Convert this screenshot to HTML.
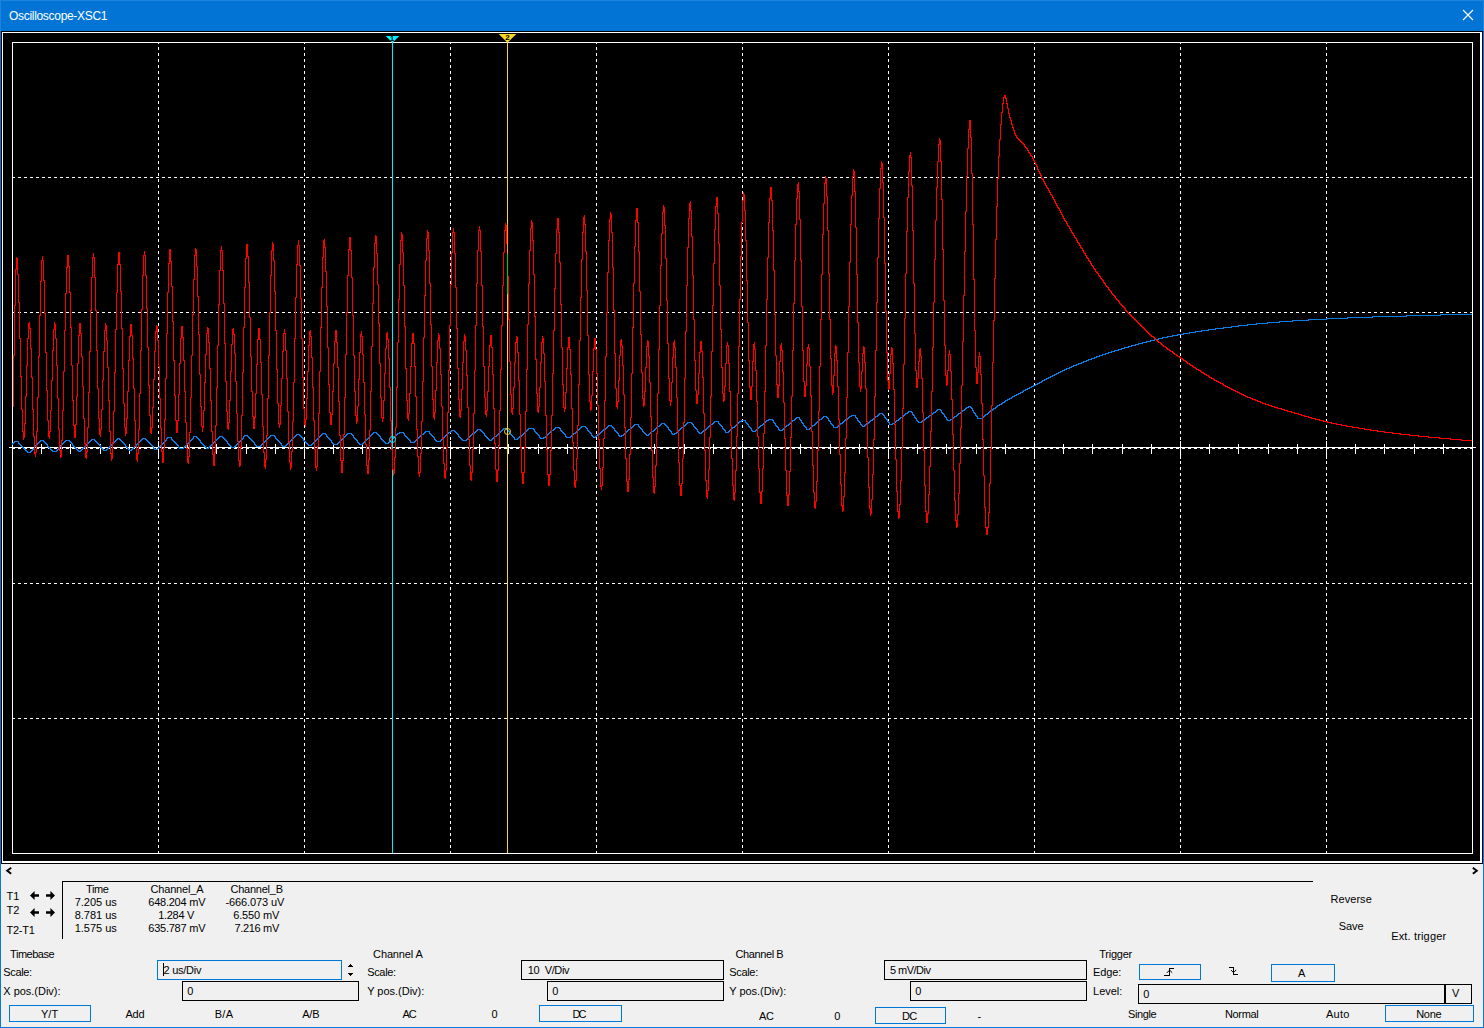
<!DOCTYPE html>
<html lang="en">
<head>
<meta charset="utf-8">
<title>Oscilloscope-XSC1</title>
<style>
html,body{margin:0;padding:0;background:#f0f0f0;}
body{width:1484px;height:1028px;position:relative;overflow:hidden;font-family:"Liberation Sans",sans-serif;font-size:11px;color:#000;}
.win{position:absolute;left:0;top:0;width:1482px;height:1026px;border:1px solid #0a78d7;background:#f0f0f0;}
.title{position:absolute;left:0;top:0;width:1482px;height:30px;background:#0274d6;border:1px solid #1c84dc;border-bottom:0;}
.title .cap{position:absolute;left:8px;top:8px;color:#fff;font-size:12px;line-height:14px;white-space:nowrap;letter-spacing:-0.305px;}
.title svg{position:absolute;left:1461px;top:8px;}
.scope{position:absolute;left:0;top:0;}
.abs{position:absolute;}
.t{position:absolute;white-space:nowrap;line-height:13px;height:13px;}
.t.c{text-align:center;}
.bx{position:absolute;border:1px solid #000;background:transparent;}
.flag{font-family:"Liberation Sans",sans-serif;font-size:7.5px;font-weight:bold;fill:#000;text-anchor:middle;}
</style>
</head>
<body>
<div class="win"></div>
<div class="title"><span class="cap">Oscilloscope-XSC1</span>
<svg width="12" height="12" viewBox="0 0 12 12"><path d="M1 1L11 11M11 1L1 11" stroke="#fff" stroke-width="1.1" fill="none"/></svg>
</div>
<svg class="scope" width="1484" height="864" viewBox="0 0 1484 864" shape-rendering="crispEdges">
<rect x="1" y="31" width="1482" height="833" fill="#000"/>
<rect x="2" y="32" width="1479" height="1" fill="#fff"/>
<rect x="2" y="32" width="1" height="830" fill="#fff"/>
<rect x="1480" y="32" width="2" height="831" fill="#fff"/>
<rect x="2" y="861" width="1480" height="2" fill="#fff"/>
<rect x="12.5" y="42.5" width="1460" height="811" fill="none" stroke="#fff" stroke-width="1"/>
<path d="M158.5 43V853M304.5 43V853M450.5 43V853M596.5 43V853M742.5 43V853M888.5 43V853M1034.5 43V853M1180.5 43V853M1326.5 43V853" stroke="#fff" stroke-width="1" stroke-dasharray="3 3" stroke-dashoffset="2" fill="none"/>
<path d="M12 177.5H1472M12 312.5H1472M12 448.5H1472M12 583.5H1472M12 718.5H1472" stroke="#fff" stroke-width="1" stroke-dasharray="3 3" fill="none"/>
<path d="M9 447.5H1476M12.5 441V459M41.5 444V454M70.5 444V454M100.5 444V454M129.5 444V454M158.5 441V459M187.5 444V454M216.5 444V454M246.5 444V454M275.5 444V454M304.5 441V459M333.5 444V454M362.5 444V454M392.5 444V454M421.5 444V454M450.5 441V459M479.5 444V454M508.5 444V454M538.5 444V454M567.5 444V454M596.5 441V459M625.5 444V454M654.5 444V454M684.5 444V454M713.5 444V454M742.5 441V459M771.5 444V454M800.5 444V454M830.5 444V454M859.5 444V454M888.5 441V459M917.5 444V454M946.5 444V454M976.5 444V454M1005.5 444V454M1034.5 441V459M1063.5 444V454M1092.5 444V454M1122.5 444V454M1151.5 444V454M1180.5 441V459M1209.5 444V454M1238.5 444V454M1268.5 444V454M1297.5 444V454M1326.5 441V459M1355.5 444V454M1384.5 444V454M1414.5 444V454M1443.5 444V454M1472.5 441V459" stroke="#fff" stroke-width="1" fill="none"/>
<path d="M12.5 443V445M13.5 442V444M14.5 441V443M15.5 441V442M16.5 441V442M17.5 441V442M18.5 441V444M19.5 443V445M20.5 444V446M21.5 445V447M22.5 446V448M23.5 447V449M24.5 448V450M25.5 449V451M26.5 450V452M27.5 451V453M28.5 452V453M29.5 452V453M30.5 451V453M31.5 450V452M32.5 449V451M33.5 448V450M34.5 446V449M35.5 445V447M36.5 444V446M37.5 443V445M38.5 442V444M39.5 441V443M40.5 440V442M41.5 440V441M42.5 440V441M43.5 440V442M44.5 441V443M45.5 442V444M46.5 443V445M47.5 444V447M48.5 446V448M49.5 447V449M50.5 448V450M51.5 449V451M52.5 450V452M53.5 451V452M54.5 451V452M55.5 451V452M56.5 450V452M57.5 449V451M58.5 447V450M59.5 446V448M60.5 445V447M61.5 444V446M62.5 443V445M63.5 442V444M64.5 441V443M65.5 440V442M66.5 440V441M67.5 440V441M68.5 440V441M69.5 440V442M70.5 441V443M71.5 442V444M72.5 443V446M73.5 445V447M74.5 446V448M75.5 447V449M76.5 448V450M77.5 449V451M78.5 450V452M79.5 451V452M80.5 450V452M81.5 449V451M82.5 448V450M83.5 447V449M84.5 446V448M85.5 445V447M86.5 444V446M87.5 443V445M88.5 442V444M89.5 441V443M90.5 440V442M91.5 439V441M92.5 439V440M93.5 439V440M94.5 439V441M95.5 440V442M96.5 441V443M97.5 442V444M98.5 443V445M99.5 444V446M100.5 445V448M101.5 447V449M102.5 448V450M103.5 449V451M104.5 450V451M105.5 450V451M106.5 449V451M107.5 448V450M108.5 447V449M109.5 446V448M110.5 445V447M111.5 444V446M112.5 443V445M113.5 442V444M114.5 441V443M115.5 440V442M116.5 439V441M117.5 438V440M118.5 438V439M119.5 438V440M120.5 439V441M121.5 440V442M122.5 441V443M123.5 442V444M124.5 443V445M125.5 444V447M126.5 446V448M127.5 447V449M128.5 448V450M129.5 449V451M130.5 450V451M131.5 449V451M132.5 448V450M133.5 447V449M134.5 446V448M135.5 445V447M136.5 444V446M137.5 443V445M138.5 442V444M139.5 441V443M140.5 440V442M141.5 439V441M142.5 438V440M143.5 438V439M144.5 438V439M145.5 438V440M146.5 439V441M147.5 440V442M148.5 441V443M149.5 442V444M150.5 443V445M151.5 444V446M152.5 445V447M153.5 446V449M154.5 448V450M155.5 449V450M156.5 449V450M157.5 448V450M158.5 447V449M159.5 446V448M160.5 445V447M161.5 444V446M162.5 443V445M163.5 442V444M164.5 441V443M165.5 440V442M166.5 438V441M167.5 437V439M168.5 437V438M169.5 437V438M170.5 437V438M171.5 437V440M172.5 439V441M173.5 440V442M174.5 441V443M175.5 442V444M176.5 443V445M177.5 444V446M178.5 445V448M179.5 447V449M180.5 448V449M181.5 448V449M182.5 448V449M183.5 447V449M184.5 446V448M185.5 445V447M186.5 444V446M187.5 443V445M188.5 442V444M189.5 441V443M190.5 440V442M191.5 439V441M192.5 438V440M193.5 436V439M194.5 436V437M195.5 436V437M196.5 436V438M197.5 437V439M198.5 438V440M199.5 439V441M200.5 440V443M201.5 442V444M202.5 443V445M203.5 444V446M204.5 445V447M205.5 446V448M206.5 447V449M207.5 448V449M208.5 447V449M209.5 446V448M210.5 445V447M211.5 444V446M212.5 443V445M213.5 442V444M214.5 441V443M215.5 440V442M216.5 439V441M217.5 438V440M218.5 437V439M219.5 436V438M220.5 436V437M221.5 436V437M222.5 436V438M223.5 437V439M224.5 438V440M225.5 439V441M226.5 440V442M227.5 441V444M228.5 443V445M229.5 444V446M230.5 445V447M231.5 446V448M232.5 447V448M233.5 447V448M234.5 446V448M235.5 445V447M236.5 444V446M237.5 443V445M238.5 442V444M239.5 441V443M240.5 440V442M241.5 439V441M242.5 438V440M243.5 436V439M244.5 435V437M245.5 435V436M246.5 435V436M247.5 435V437M248.5 436V438M249.5 437V439M250.5 438V440M251.5 439V441M252.5 440V442M253.5 441V443M254.5 442V445M255.5 444V446M256.5 445V447M257.5 446V447M258.5 446V447M259.5 446V447M260.5 445V447M261.5 444V446M262.5 443V445M263.5 442V444M264.5 441V443M265.5 440V442M266.5 439V441M267.5 438V440M268.5 437V439M269.5 436V438M270.5 435V437M271.5 435V436M272.5 435V436M273.5 435V436M274.5 435V437M275.5 436V439M276.5 438V440M277.5 439V441M278.5 440V442M279.5 441V443M280.5 442V444M281.5 443V446M282.5 445V447M283.5 446V447M284.5 446V447M285.5 445V447M286.5 444V446M287.5 443V445M288.5 442V444M289.5 441V443M290.5 440V442M291.5 439V441M292.5 438V440M293.5 437V439M294.5 436V438M295.5 435V437M296.5 434V436M297.5 434V435M298.5 434V435M299.5 434V436M300.5 435V437M301.5 436V438M302.5 437V439M303.5 438V441M304.5 440V442M305.5 441V443M306.5 442V444M307.5 443V445M308.5 444V446M309.5 445V446M310.5 445V446M311.5 444V446M312.5 443V445M313.5 442V444M314.5 441V443M315.5 440V442M316.5 439V441M317.5 438V440M318.5 437V439M319.5 436V438M320.5 435V437M321.5 434V436M322.5 433V435M323.5 433V434M324.5 433V434M325.5 433V435M326.5 434V437M327.5 436V438M328.5 437V439M329.5 438V440M330.5 439V441M331.5 440V443M332.5 442V444M333.5 443V445M334.5 444V445M335.5 444V445M336.5 444V445M337.5 443V445M338.5 442V444M339.5 441V443M340.5 440V442M341.5 439V441M342.5 438V440M343.5 437V439M344.5 436V438M345.5 435V437M346.5 434V436M347.5 433V435M348.5 433V434M349.5 433V434M350.5 433V434M351.5 433V435M352.5 434V436M353.5 435V438M354.5 437V439M355.5 438V440M356.5 439V441M357.5 440V443M358.5 442V444M359.5 443V445M360.5 444V445M361.5 444V445M362.5 443V445M363.5 442V444M364.5 441V443M365.5 440V442M366.5 439V441M367.5 438V440M368.5 437V439M369.5 436V438M370.5 435V437M371.5 434V436M372.5 433V435M373.5 432V434M374.5 432V433M375.5 432V433M376.5 432V434M377.5 433V435M378.5 434V436M379.5 435V437M380.5 436V439M381.5 438V440M382.5 439V441M383.5 440V442M384.5 441V443M385.5 442V444M386.5 443V444M387.5 443V444M388.5 442V444M389.5 441V443M390.5 440V442M391.5 439V441M392.5 438V440M393.5 437V439M394.5 436V438M395.5 435V437M396.5 434V436M397.5 433V435M398.5 433V434M399.5 432V434M400.5 432V433M401.5 432V433M402.5 432V433M403.5 432V434M404.5 433V436M405.5 435V437M406.5 436V438M407.5 437V439M408.5 438V440M409.5 439V441M410.5 440V443M411.5 442V443M412.5 442V443M413.5 442V443M414.5 441V443M415.5 440V442M416.5 439V441M417.5 438V440M418.5 437V439M419.5 436V438M420.5 435V437M421.5 434V436M422.5 434V435M423.5 433V435M424.5 432V434M425.5 431V433M426.5 431V432M427.5 431V432M428.5 431V432M429.5 431V434M430.5 433V435M431.5 434V436M432.5 435V437M433.5 436V438M434.5 437V440M435.5 439V441M436.5 440V442M437.5 441V442M438.5 441V442M439.5 441V442M440.5 440V442M441.5 439V441M442.5 438V440M443.5 437V439M444.5 436V438M445.5 435V437M446.5 434V436M447.5 433V435M448.5 432V434M449.5 432V433M450.5 431V433M451.5 430V432M452.5 430V431M453.5 430V431M454.5 430V432M455.5 431V433M456.5 432V434M457.5 433V435M458.5 434V437M459.5 436V438M460.5 437V439M461.5 438V440M462.5 439V441M463.5 440V441M464.5 440V441M465.5 440V441M466.5 439V441M467.5 438V440M468.5 437V439M469.5 436V438M470.5 435V437M471.5 434V436M472.5 433V435M473.5 433V434M474.5 432V434M475.5 431V433M476.5 430V432M477.5 429V431M478.5 429V430M479.5 429V430M480.5 429V431M481.5 430V432M482.5 431V433M483.5 432V434M484.5 433V436M485.5 435V437M486.5 436V438M487.5 437V439M488.5 438V440M489.5 439V441M490.5 440V441M491.5 439V441M492.5 438V440M493.5 437V439M494.5 436V438M495.5 436V437M496.5 435V437M497.5 434V436M498.5 433V435M499.5 432V434M500.5 431V433M501.5 430V432M502.5 429V431M503.5 428V430M504.5 428V429M505.5 428V429M506.5 428V430M507.5 429V431M508.5 430V432M509.5 431V434M510.5 433V435M511.5 434V436M512.5 435V437M513.5 436V438M514.5 437V440M515.5 439V440M516.5 439V440M517.5 438V440M518.5 437V439M519.5 436V438M520.5 436V437M521.5 435V437M522.5 434V436M523.5 433V435M524.5 432V434M525.5 431V433M526.5 430V432M527.5 429V431M528.5 428V430M529.5 428V429M530.5 428V429M531.5 428V429M532.5 428V429M533.5 428V430M534.5 429V432M535.5 431V433M536.5 432V434M537.5 433V435M538.5 434V436M539.5 435V438M540.5 437V439M541.5 438V439M542.5 438V439M543.5 437V439M544.5 437V438M545.5 436V438M546.5 435V437M547.5 434V436M548.5 433V435M549.5 432V434M550.5 431V433M551.5 430V432M552.5 430V431M553.5 429V431M554.5 428V430M555.5 427V429M556.5 427V428M557.5 427V428M558.5 427V428M559.5 427V429M560.5 428V431M561.5 430V432M562.5 431V433M563.5 432V434M564.5 433V435M565.5 434V437M566.5 436V438M567.5 437V438M568.5 437V438M569.5 437V438M570.5 436V438M571.5 435V437M572.5 434V436M573.5 433V435M574.5 433V434M575.5 432V434M576.5 431V433M577.5 430V432M578.5 429V431M579.5 428V430M580.5 427V429M581.5 426V428M582.5 426V427M583.5 426V427M584.5 426V427M585.5 426V428M586.5 427V429M587.5 428V431M588.5 430V432M589.5 431V433M590.5 432V434M591.5 433V436M592.5 435V437M593.5 436V438M594.5 437V438M595.5 436V438M596.5 435V437M597.5 434V436M598.5 434V435M599.5 433V435M600.5 432V434M601.5 431V433M602.5 430V432M603.5 429V431M604.5 429V430M605.5 428V430M606.5 427V429M607.5 426V428M608.5 425V427M609.5 425V426M610.5 425V426M611.5 425V427M612.5 426V428M613.5 427V429M614.5 428V431M615.5 430V432M616.5 431V433M617.5 432V434M618.5 433V436M619.5 435V437M620.5 436V437M621.5 435V437M622.5 435V436M623.5 434V436M624.5 433V435M625.5 432V434M626.5 431V433M627.5 430V432M628.5 429V431M629.5 429V430M630.5 428V430M631.5 427V429M632.5 426V428M633.5 425V427M634.5 424V426M635.5 424V425M636.5 424V425M637.5 424V425M638.5 424V427M639.5 426V428M640.5 427V429M641.5 428V430M642.5 429V432M643.5 431V433M644.5 432V434M645.5 433V435M646.5 434V436M647.5 435V436M648.5 434V436M649.5 433V435M650.5 432V434M651.5 431V433M652.5 431V432M653.5 430V432M654.5 429V431M655.5 428V430M656.5 427V429M657.5 426V428M658.5 426V427M659.5 425V427M660.5 424V426M661.5 423V425M662.5 423V424M663.5 423V424M664.5 423V425M665.5 424V426M666.5 425V427M667.5 426V428M668.5 427V430M669.5 429V431M670.5 430V432M671.5 431V434M672.5 433V435M673.5 434V435M674.5 433V435M675.5 433V434M676.5 432V434M677.5 431V433M678.5 430V432M679.5 429V431M680.5 428V430M681.5 427V429M682.5 427V428M683.5 426V428M684.5 425V427M685.5 424V426M686.5 423V425M687.5 422V424M688.5 422V423M689.5 422V423M690.5 422V423M691.5 422V424M692.5 423V425M693.5 424V427M694.5 426V428M695.5 427V429M696.5 428V430M697.5 429V432M698.5 431V433M699.5 432V434M700.5 433V434M701.5 432V434M702.5 431V433M703.5 430V432M704.5 430V431M705.5 429V431M706.5 428V430M707.5 427V429M708.5 426V428M709.5 425V427M710.5 424V426M711.5 424V425M712.5 423V425M713.5 422V424M714.5 421V423M715.5 421V422M716.5 421V422M717.5 421V422M718.5 421V424M719.5 423V425M720.5 424V426M721.5 425V427M722.5 426V429M723.5 428V430M724.5 429V431M725.5 430V433M726.5 432V433M727.5 432V433M728.5 431V433M729.5 430V432M730.5 429V431M731.5 428V430M732.5 427V429M733.5 427V428M734.5 426V428M735.5 425V427M736.5 424V426M737.5 423V425M738.5 422V424M739.5 421V423M740.5 421V422M741.5 420V422M742.5 420V421M743.5 420V421M744.5 420V421M745.5 420V423M746.5 422V424M747.5 423V425M748.5 424V427M749.5 426V428M750.5 427V429M751.5 428V431M752.5 430V432M753.5 431V432M754.5 431V432M755.5 430V432M756.5 429V431M757.5 428V430M758.5 427V429M759.5 426V428M760.5 425V427M761.5 425V426M762.5 424V426M763.5 423V425M764.5 422V424M765.5 421V423M766.5 420V422M767.5 420V421M768.5 419V421M769.5 419V420M770.5 419V420M771.5 419V420M772.5 419V421M773.5 420V423M774.5 422V424M775.5 423V426M776.5 425V427M777.5 426V428M778.5 427V430M779.5 429V431M780.5 430V431M781.5 430V431M782.5 429V431M783.5 428V430M784.5 427V429M785.5 426V428M786.5 425V427M787.5 425V426M788.5 424V426M789.5 423V425M790.5 422V424M791.5 421V423M792.5 420V422M793.5 420V421M794.5 419V421M795.5 418V420M796.5 417V419M797.5 417V418M798.5 417V418M799.5 417V420M800.5 419V421M801.5 420V423M802.5 422V424M803.5 423V426M804.5 425V427M805.5 426V428M806.5 427V430M807.5 429V430M808.5 429V430M809.5 428V430M810.5 427V429M811.5 426V428M812.5 425V427M813.5 425V426M814.5 424V426M815.5 423V425M816.5 422V424M817.5 421V423M818.5 420V422M819.5 419V421M820.5 419V420M821.5 418V420M822.5 417V419M823.5 416V418M824.5 416V417M825.5 416V417M826.5 416V418M827.5 417V419M828.5 418V421M829.5 420V422M830.5 421V424M831.5 423V425M832.5 424V426M833.5 425V428M834.5 427V428M835.5 427V428M836.5 427V428M837.5 426V428M838.5 425V427M839.5 424V426M840.5 423V425M841.5 423V424M842.5 422V424M843.5 421V423M844.5 420V422M845.5 419V421M846.5 419V420M847.5 418V420M848.5 417V419M849.5 416V418M850.5 416V417M851.5 415V417M852.5 415V416M853.5 415V416M854.5 415V416M855.5 415V418M856.5 417V419M857.5 418V421M858.5 420V422M859.5 421V423M860.5 422V425M861.5 424V426M862.5 425V427M863.5 426V427M864.5 425V427M865.5 424V426M866.5 423V425M867.5 423V424M868.5 422V424M869.5 421V423M870.5 420V422M871.5 420V421M872.5 419V421M873.5 418V420M874.5 417V419M875.5 416V418M876.5 416V417M877.5 415V417M878.5 414V416M879.5 413V415M880.5 413V414M881.5 413V414M882.5 413V415M883.5 414V416M884.5 415V418M885.5 417V419M886.5 418V420M887.5 419V422M888.5 421V423M889.5 422V425M890.5 424V425M891.5 424V425M892.5 423V425M893.5 423V424M894.5 422V424M895.5 421V423M896.5 420V422M897.5 420V421M898.5 419V421M899.5 418V420M900.5 417V419M901.5 417V418M902.5 416V418M903.5 415V417M904.5 414V416M905.5 413V415M906.5 413V414M907.5 412V414M908.5 411V413M909.5 411V412M910.5 411V412M911.5 411V413M912.5 412V415M913.5 414V416M914.5 415V418M915.5 417V419M916.5 418V421M917.5 420V422M918.5 421V423M919.5 422V423M920.5 422V423M921.5 421V423M922.5 420V422M923.5 420V421M924.5 419V421M925.5 418V420M926.5 417V419M927.5 417V418M928.5 416V418M929.5 415V417M930.5 415V416M931.5 414V416M932.5 413V415M933.5 412V414M934.5 412V413M935.5 411V413M936.5 410V412M937.5 409V411M938.5 409V410M939.5 409V410M940.5 409V411M941.5 410V413M942.5 412V414M943.5 413V415M944.5 414V417M945.5 416V418M946.5 417V420M947.5 419V421M948.5 420V421M949.5 420V421M950.5 419V421M951.5 419V420M952.5 418V420M953.5 417V419M954.5 416V418M955.5 416V417M956.5 415V417M957.5 414V416M958.5 413V415M959.5 413V414M960.5 412V414M961.5 411V413M962.5 410V412M963.5 410V411M964.5 409V411M965.5 408V410M966.5 407V409M967.5 407V408M968.5 406V408M969.5 406V407M970.5 406V408M971.5 407V409M972.5 408V411M973.5 410V413M974.5 412V414M975.5 413V416M976.5 415V417M977.5 416V419M978.5 418V419M979.5 418V419M980.5 418V419M981.5 418V419M982.5 417V419M983.5 416V418M984.5 415V417M985.5 414V416M986.5 414V415M987.5 413V415M988.5 412V414M989.5 411V413M990.5 410V412M991.5 410V411M992.5 409V411M993.5 408V410M994.5 408V409M995.5 407V409M996.5 406V408M997.5 405V407M998.5 405V406M999.5 404V406M1000.5 404V405M1001.5 403V405M1002.5 402V404M1003.5 402V403M1004.5 401V403M1005.5 400V402M1006.5 400V401M1007.5 399V401M1008.5 399V400M1009.5 398V400M1010.5 398V399M1011.5 397V399M1012.5 396V398M1013.5 396V397M1014.5 395V397M1015.5 395V396M1016.5 394V396M1017.5 394V395M1018.5 393V395M1019.5 393V394M1020.5 392V394M1021.5 392V393M1022.5 391V393M1023.5 390V392M1024.5 390V391M1025.5 389V391M1026.5 389V390M1027.5 388V390M1028.5 388V389M1029.5 387V389M1030.5 387V388M1031.5 386V388M1032.5 386V387M1033.5 385V387M1034.5 385V386M1035.5 384V386M1036.5 384V385M1037.5 383V385M1038.5 383V384M1039.5 382V384M1040.5 382V383M1041.5 381V383M1042.5 380V382M1043.5 380V381M1044.5 379V381M1045.5 379V380M1046.5 378V380M1047.5 378V379M1048.5 377V379M1049.5 377V378M1050.5 376V378M1051.5 376V377M1052.5 375V377M1053.5 375V376M1054.5 374V376M1055.5 374V375M1056.5 373V375M1057.5 373V374M1058.5 372V374M1059.5 372V373M1060.5 371V373M1061.5 371V372M1062.5 370V372M1063.5 370V371M1064.5 369V371M1065.5 369V370M1066.5 368V370M1067.5 368V369M1068.5 368V369M1069.5 367V369M1070.5 367V368M1071.5 366V368M1072.5 366V367M1073.5 365V367M1074.5 365V366M1075.5 365V366M1076.5 364V366M1077.5 364V365M1078.5 363V365M1079.5 363V364M1080.5 363V364M1081.5 362V364M1082.5 362V363M1083.5 361V363M1084.5 361V362M1085.5 361V362M1086.5 360V362M1087.5 360V361M1088.5 359V361M1089.5 359V360M1090.5 359V360M1091.5 358V360M1092.5 358V359M1093.5 358V359M1094.5 357V359M1095.5 357V358M1096.5 356V358M1097.5 356V357M1098.5 356V357M1099.5 355V357M1100.5 355V356M1101.5 355V356M1102.5 354V356M1103.5 354V355M1104.5 354V355M1105.5 353V355M1106.5 353V354M1107.5 353V354M1108.5 352V354M1109.5 352V353M1110.5 352V353M1111.5 351V353M1112.5 351V352M1113.5 351V352M1114.5 350V352M1115.5 350V351M1116.5 350V351M1117.5 350V351M1118.5 349V351M1119.5 349V350M1120.5 349V350M1121.5 348V350M1122.5 348V349M1123.5 348V349M1124.5 347V349M1125.5 347V348M1126.5 347V348M1127.5 347V348M1128.5 346V348M1129.5 346V347M1130.5 346V347M1131.5 345V347M1132.5 345V346M1133.5 345V346M1134.5 345V346M1135.5 344V346M1136.5 344V345M1137.5 344V345M1138.5 343V345M1139.5 343V344M1140.5 343V344M1141.5 343V344M1142.5 342V344M1143.5 342V343M1144.5 342V343M1145.5 342V343M1146.5 341V343M1147.5 341V342M1148.5 341V342M1149.5 341V342M1150.5 340V342M1151.5 340V341M1152.5 340V341M1153.5 340V341M1154.5 339V341M1155.5 339V340M1156.5 339V340M1157.5 339V340M1158.5 338V340M1159.5 338V339M1160.5 338V339M1161.5 338V339M1162.5 337V339M1163.5 337V338M1164.5 337V338M1165.5 337V338M1166.5 337V338M1167.5 336V338M1168.5 336V337M1169.5 336V337M1170.5 336V337M1171.5 336V337M1172.5 335V337M1173.5 335V336M1174.5 335V336M1175.5 335V336M1176.5 335V336M1177.5 334V336M1178.5 334V335M1179.5 334V335M1180.5 334V335M1181.5 334V335M1182.5 334V335M1183.5 333V335M1184.5 333V334M1185.5 333V334M1186.5 333V334M1187.5 333V334M1188.5 333V334M1189.5 332V334M1190.5 332V333M1191.5 332V333M1192.5 332V333M1193.5 332V333M1194.5 332V333M1195.5 331V333M1196.5 331V332M1197.5 331V332M1198.5 331V332M1199.5 331V332M1200.5 331V332M1201.5 330V332M1202.5 330V331M1203.5 330V331M1204.5 330V331M1205.5 330V331M1206.5 330V331M1207.5 330V331M1208.5 329V331M1209.5 329V330M1210.5 329V330M1211.5 329V330M1212.5 329V330M1213.5 329V330M1214.5 329V330M1215.5 328V330M1216.5 328V329M1217.5 328V329M1218.5 328V329M1219.5 328V329M1220.5 328V329M1221.5 328V329M1222.5 328V329M1223.5 327V329M1224.5 327V328M1225.5 327V328M1226.5 327V328M1227.5 327V328M1228.5 327V328M1229.5 327V328M1230.5 327V328M1231.5 326V328M1232.5 326V327M1233.5 326V327M1234.5 326V327M1235.5 326V327M1236.5 326V327M1237.5 326V327M1238.5 325V327M1239.5 325V326M1240.5 325V326M1241.5 325V326M1242.5 325V326M1243.5 325V326M1244.5 325V326M1245.5 325V326M1246.5 325V326M1247.5 324V326M1248.5 324V325M1249.5 324V325M1250.5 324V325M1251.5 324V325M1252.5 324V325M1253.5 324V325M1254.5 324V325M1255.5 324V325M1256.5 323V325M1257.5 323V324M1258.5 323V324M1259.5 323V324M1260.5 323V324M1261.5 323V324M1262.5 323V324M1263.5 323V324M1264.5 323V324M1265.5 323V324M1266.5 323V324M1267.5 322V324M1268.5 322V323M1269.5 322V323M1270.5 322V323M1271.5 322V323M1272.5 322V323M1273.5 322V323M1274.5 322V323M1275.5 322V323M1276.5 322V323M1277.5 322V323M1278.5 322V323M1279.5 321V323M1280.5 321V322M1281.5 321V322M1282.5 321V322M1283.5 321V322M1284.5 321V322M1285.5 321V322M1286.5 321V322M1287.5 321V322M1288.5 321V322M1289.5 321V322M1290.5 321V322M1291.5 321V322M1292.5 320V322M1293.5 320V321M1294.5 320V321M1295.5 320V321M1296.5 320V321M1297.5 320V321M1298.5 320V321M1299.5 320V321M1300.5 320V321M1301.5 320V321M1302.5 320V321M1303.5 320V321M1304.5 320V321M1305.5 320V321M1306.5 320V321M1307.5 320V321M1308.5 319V321M1309.5 319V320M1310.5 319V320M1311.5 319V320M1312.5 319V320M1313.5 319V320M1314.5 319V320M1315.5 319V320M1316.5 319V320M1317.5 319V320M1318.5 319V320M1319.5 319V320M1320.5 319V320M1321.5 319V320M1322.5 319V320M1323.5 319V320M1324.5 319V320M1325.5 319V320M1326.5 318V320M1327.5 318V319M1328.5 318V319M1329.5 318V319M1330.5 318V319M1331.5 318V319M1332.5 318V319M1333.5 318V319M1334.5 318V319M1335.5 318V319M1336.5 318V319M1337.5 318V319M1338.5 318V319M1339.5 318V319M1340.5 318V319M1341.5 318V319M1342.5 318V319M1343.5 318V319M1344.5 318V319M1345.5 318V319M1346.5 318V319M1347.5 317V319M1348.5 317V318M1349.5 317V318M1350.5 317V318M1351.5 317V318M1352.5 317V318M1353.5 317V318M1354.5 317V318M1355.5 317V318M1356.5 317V318M1357.5 317V318M1358.5 317V318M1359.5 317V318M1360.5 317V318M1361.5 317V318M1362.5 317V318M1363.5 317V318M1364.5 317V318M1365.5 317V318M1366.5 317V318M1367.5 317V318M1368.5 317V318M1369.5 317V318M1370.5 317V318M1371.5 317V318M1372.5 316V318M1373.5 316V317M1374.5 316V317M1375.5 316V317M1376.5 316V317M1377.5 316V317M1378.5 316V317M1379.5 316V317M1380.5 316V317M1381.5 316V317M1382.5 316V317M1383.5 316V317M1384.5 316V317M1385.5 316V317M1386.5 316V317M1387.5 316V317M1388.5 316V317M1389.5 316V317M1390.5 316V317M1391.5 316V317M1392.5 316V317M1393.5 316V317M1394.5 316V317M1395.5 316V317M1396.5 316V317M1397.5 316V317M1398.5 316V317M1399.5 316V317M1400.5 316V317M1401.5 316V317M1402.5 316V317M1403.5 316V317M1404.5 316V317M1405.5 316V317M1406.5 315V317M1407.5 315V316M1408.5 315V316M1409.5 315V316M1410.5 315V316M1411.5 315V316M1412.5 315V316M1413.5 315V316M1414.5 315V316M1415.5 315V316M1416.5 315V316M1417.5 315V316M1418.5 315V316M1419.5 315V316M1420.5 315V316M1421.5 315V316M1422.5 315V316M1423.5 315V316M1424.5 315V316M1425.5 315V316M1426.5 315V316M1427.5 315V316M1428.5 315V316M1429.5 315V316M1430.5 315V316M1431.5 315V316M1432.5 315V316M1433.5 315V316M1434.5 315V316M1435.5 315V316M1436.5 315V316M1437.5 315V316M1438.5 315V316M1439.5 315V316M1440.5 314V316M1441.5 314V315M1442.5 314V315M1443.5 314V315M1444.5 314V315M1445.5 314V315M1446.5 314V315M1447.5 314V315M1448.5 314V315M1449.5 314V315M1450.5 314V315M1451.5 314V315M1452.5 314V315M1453.5 314V315M1454.5 314V315M1455.5 314V315M1456.5 314V315M1457.5 314V315M1458.5 314V315M1459.5 314V315M1460.5 314V315M1461.5 314V315M1462.5 314V315M1463.5 314V315M1464.5 314V315M1465.5 314V315M1466.5 314V315M1467.5 314V315M1468.5 314V315M1469.5 314V315M1470.5 314V315M1471.5 314V315" stroke="#0a7ee6" stroke-width="1" fill="none"/>
<path d="M392.5 42V853" stroke="#00f0ff" stroke-width="1"/>
<path d="M507.5 42V853" stroke="#f8d820" stroke-width="1"/>
<path d="M13.5 355V407M14.5 305V356M15.5 269V306M16.5 257V270M17.5 258V275M18.5 274V303M19.5 302V339M20.5 338V377M21.5 376V410M22.5 409V432M23.5 431V440M24.5 423V438M25.5 396V424M26.5 365V397M27.5 338V366M28.5 323V339M29.5 322V329M30.5 328V349M31.5 348V378M32.5 377V410M33.5 409V437M34.5 436V454M35.5 452V457M36.5 431V453M37.5 397V432M38.5 356V398M39.5 315V357M40.5 281V316M41.5 260V282M42.5 256V261M43.5 260V281M44.5 280V314M45.5 313V353M46.5 352V391M47.5 390V421M48.5 420V437M49.5 431V439M50.5 410V432M51.5 380V411M52.5 350V381M53.5 329V351M54.5 322V330M55.5 324V339M56.5 338V366M57.5 365V399M58.5 398V430M59.5 429V451M60.5 450V458M61.5 440V457M62.5 410V441M63.5 371V411M64.5 330V372M65.5 293V331M66.5 267V294M67.5 255V268M68.5 255V267M69.5 266V293M70.5 292V328M71.5 327V366M72.5 365V401M73.5 400V426M74.5 425V438M75.5 424V438M76.5 396V425M77.5 363V397M78.5 335V364M79.5 323V336M80.5 323V334M81.5 333V357M82.5 356V387M83.5 386V419M84.5 418V444M85.5 443V458M86.5 451V459M87.5 427V452M88.5 392V428M89.5 351V393M90.5 310V352M91.5 277V311M92.5 257V278M93.5 253V258M94.5 257V278M95.5 277V311M96.5 310V351M97.5 350V389M98.5 388V419M99.5 418V435M100.5 429V437M101.5 409V430M102.5 380V410M103.5 351V381M104.5 330V352M105.5 323V331M106.5 325V341M107.5 340V368M108.5 367V401M109.5 400V432M110.5 431V454M111.5 453V461M112.5 442V459M113.5 411V443M114.5 372V412M115.5 329V373M116.5 292V330M117.5 264V293M118.5 252V265M119.5 252V265M120.5 264V292M121.5 291V329M122.5 328V369M123.5 368V404M124.5 403V428M125.5 427V436M126.5 418V434M127.5 391V419M128.5 360V392M129.5 336V361M130.5 324V337M131.5 324V336M132.5 335V359M133.5 358V389M134.5 388V421M135.5 420V447M136.5 446V460M137.5 453V462M138.5 429V454M139.5 393V430M140.5 350V394M141.5 309V351M142.5 275V310M143.5 255V276M144.5 251V256M145.5 255V276M146.5 275V309M147.5 308V348M148.5 347V386M149.5 385V416M150.5 415V433M151.5 427V434M152.5 407V428M153.5 379V408M154.5 351V380M155.5 331V352M156.5 325V332M157.5 326V341M158.5 340V367M159.5 366V399M160.5 398V429M161.5 428V452M162.5 451V463M163.5 448V463M164.5 419V449M165.5 378V420M166.5 333V379M167.5 292V334M168.5 263V293M169.5 249V264M170.5 249V262M171.5 261V287M172.5 286V322M173.5 321V361M174.5 360V396M175.5 395V421M176.5 420V433M177.5 420V433M178.5 394V421M179.5 363V395M180.5 338V364M181.5 326V339M182.5 326V338M183.5 337V361M184.5 360V392M185.5 391V423M186.5 422V449M187.5 448V463M188.5 456V464M189.5 432V457M190.5 397V433M191.5 355V398M192.5 314V356M193.5 279V315M194.5 255V280M195.5 248V256M196.5 249V267M197.5 266V297M198.5 296V335M199.5 334V375M200.5 374V407M201.5 406V427M202.5 426V432M203.5 410V428M204.5 382V411M205.5 354V383M206.5 333V355M207.5 327V334M208.5 328V343M209.5 342V369M210.5 368V401M211.5 400V432M212.5 431V455M213.5 454V466M214.5 452V466M215.5 425V453M216.5 387V426M217.5 345V388M218.5 304V346M219.5 270V305M220.5 250V271M221.5 246V251M222.5 250V271M223.5 270V304M224.5 303V344M225.5 343V382M226.5 381V412M227.5 411V429M228.5 422V430M229.5 400V423M230.5 371V401M231.5 344V372M232.5 329V345M233.5 328V335M234.5 334V354M235.5 353V382M236.5 381V414M237.5 413V442M238.5 441V461M239.5 460V467M240.5 447V466M241.5 415V448M242.5 372V416M243.5 327V373M244.5 287V328M245.5 258V288M246.5 244V259M247.5 244V257M248.5 256V283M249.5 282V318M250.5 317V357M251.5 356V392M252.5 391V417M253.5 416V429M254.5 417V429M255.5 393V418M256.5 364V394M257.5 339V365M258.5 328V340M259.5 328V340M260.5 339V363M261.5 362V395M262.5 394V427M263.5 426V453M264.5 452V467M265.5 459V469M266.5 435V460M267.5 398V436M268.5 355V399M269.5 312V356M270.5 275V313M271.5 250V276M272.5 242V251M273.5 244V261M274.5 260V292M275.5 291V331M276.5 330V370M277.5 369V404M278.5 403V424M279.5 423V428M280.5 405V425M281.5 378V406M282.5 351V379M283.5 333V352M284.5 329V334M285.5 333V351M286.5 350V379M287.5 378V412M288.5 411V442M289.5 441V463M290.5 462V470M291.5 451V468M292.5 421V452M293.5 382V422M294.5 338V383M295.5 297V339M296.5 264V298M297.5 245V265M298.5 240V246M299.5 245V266M300.5 265V299M301.5 298V339M302.5 338V378M303.5 377V409M304.5 408V425M305.5 419V427M306.5 398V420M307.5 371V399M308.5 345V372M309.5 331V346M310.5 330V337M311.5 336V358M312.5 357V388M313.5 387V421M314.5 420V450M315.5 449V468M316.5 466V471M317.5 446V467M318.5 413V447M319.5 371V414M320.5 327V372M321.5 287V328M322.5 257V288M323.5 240V258M324.5 239V248M325.5 247V272M326.5 271V307M327.5 306V348M328.5 347V385M329.5 384V413M330.5 412V425M331.5 414V425M332.5 391V415M333.5 363V392M334.5 341V364M335.5 330V342M336.5 330V343M337.5 342V368M338.5 367V402M339.5 401V436M340.5 435V461M341.5 460V473M342.5 460V473M343.5 434V461M344.5 397V435M345.5 354V398M346.5 312V355M347.5 275V313M348.5 249V276M349.5 237V250M350.5 237V251M351.5 250V278M352.5 277V316M353.5 315V356M354.5 355V392M355.5 391V416M356.5 415V424M357.5 406V422M358.5 379V407M359.5 352V380M360.5 334V353M361.5 331V337M362.5 336V355M363.5 354V383M364.5 382V415M365.5 414V445M366.5 444V466M367.5 465V474M368.5 459V474M369.5 430V460M370.5 391V431M371.5 346V392M372.5 303V347M373.5 267V304M374.5 243V268M375.5 235V244M376.5 236V254M377.5 253V285M378.5 284V324M379.5 323V364M380.5 363V398M381.5 397V418M382.5 417V422M383.5 400V419M384.5 373V401M385.5 348V374M386.5 333V349M387.5 332V340M388.5 339V359M389.5 358V388M390.5 387V421M391.5 420V450M392.5 449V470M393.5 469V476M394.5 457V474M395.5 427V458M396.5 387V428M397.5 342V388M398.5 299V343M399.5 264V300M400.5 240V265M401.5 232V241M402.5 234V253M403.5 252V286M404.5 285V327M405.5 326V369M406.5 368V401M407.5 400V419M408.5 413V421M409.5 393V414M410.5 366V394M411.5 343V367M412.5 333V344M413.5 333V344M414.5 343V367M415.5 366V397M416.5 396V430M417.5 429V457M418.5 456V474M419.5 472V477M420.5 453V473M421.5 421V454M422.5 381V422M423.5 337V382M424.5 295V338M425.5 260V296M426.5 238V261M427.5 230V239M428.5 232V251M429.5 250V284M430.5 283V325M431.5 324V367M432.5 366V400M433.5 399V418M434.5 412V420M435.5 390V413M436.5 362V391M437.5 340V363M438.5 333V341M439.5 335V349M440.5 348V375M441.5 374V407M442.5 406V439M443.5 438V464M444.5 463V478M445.5 470V479M446.5 447V471M447.5 412V448M448.5 370V413M449.5 325V371M450.5 284V326M451.5 252V285M452.5 232V253M453.5 228V233M454.5 232V254M455.5 253V288M456.5 287V329M457.5 328V369M458.5 368V400M459.5 399V417M460.5 410V418M461.5 389V411M462.5 362V390M463.5 341V363M464.5 334V342M465.5 336V351M466.5 350V376M467.5 375V408M468.5 407V440M469.5 439V466M470.5 465V480M471.5 472V481M472.5 449V473M473.5 413V450M474.5 370V414M475.5 325V371M476.5 283V326M477.5 250V284M478.5 230V251M479.5 226V231M480.5 230V252M481.5 251V286M482.5 285V327M483.5 326V367M484.5 366V398M485.5 397V415M486.5 410V417M487.5 391V411M488.5 366V392M489.5 345V367M490.5 335V346M491.5 335V348M492.5 347V375M493.5 374V409M494.5 408V444M495.5 443V470M496.5 469V482M497.5 470V482M498.5 445V471M499.5 410V446M500.5 369V411M501.5 325V370M502.5 285V326M503.5 252V286M504.5 230V253M505.5 223V231M506.5 225V244M507.5 243V277M508.5 276V320M509.5 319V362M510.5 361V395M511.5 394V413M512.5 408V415M513.5 387V409M514.5 362V388M515.5 342V363M516.5 336V343M517.5 337V353M518.5 352V381M519.5 380V415M520.5 414V448M521.5 447V473M522.5 472V484M523.5 472V484M524.5 447V473M525.5 411V448M526.5 369V412M527.5 324V370M528.5 283V325M529.5 250V284M530.5 228V251M531.5 220V229M532.5 222V241M533.5 240V275M534.5 274V317M535.5 316V360M536.5 359V394M537.5 393V412M538.5 406V413M539.5 387V407M540.5 362V388M541.5 342V363M542.5 336V343M543.5 338V354M544.5 353V382M545.5 381V416M546.5 415V450M547.5 449V475M548.5 474V486M549.5 474V486M550.5 450V475M551.5 415V451M552.5 373V416M553.5 330V374M554.5 288V331M555.5 253V289M556.5 229V254M557.5 218V230M558.5 218V233M559.5 232V263M560.5 262V305M561.5 304V348M562.5 347V385M563.5 384V408M564.5 407V412M565.5 392V409M566.5 368V393M567.5 347V369M568.5 337V348M569.5 337V350M570.5 349V375M571.5 374V409M572.5 408V443M573.5 442V471M574.5 470V487M575.5 480V488M576.5 458V481M577.5 425V459M578.5 384V426M579.5 340V385M580.5 297V341M581.5 259V298M582.5 232V260M583.5 217V233M584.5 215V225M585.5 224V252M586.5 251V291M587.5 290V336M588.5 335V375M589.5 374V402M590.5 401V411M591.5 395V410M592.5 371V396M593.5 348V372M594.5 338V349M595.5 338V350M596.5 349V374M597.5 373V406M598.5 405V440M599.5 439V469M600.5 468V487M601.5 485V490M602.5 467V486M603.5 438V468M604.5 400V439M605.5 356V401M606.5 312V357M607.5 272V313M608.5 240V273M609.5 219V241M610.5 212V220M611.5 214V233M612.5 232V268M613.5 267V311M614.5 310V354M615.5 353V389M616.5 388V407M617.5 401V409M618.5 380V402M619.5 355V381M620.5 340V356M621.5 339V346M622.5 345V366M623.5 365V395M624.5 394V428M625.5 427V459M626.5 458V482M627.5 481V492M628.5 479V492M629.5 454V480M630.5 417V455M631.5 373V418M632.5 327V374M633.5 283V328M634.5 246V284M635.5 220V247M636.5 208V221M637.5 208V223M638.5 222V252M639.5 251V292M640.5 291V335M641.5 334V373M642.5 372V399M643.5 398V407M644.5 391V406M645.5 367V392M646.5 346V368M647.5 340V347M648.5 341V357M649.5 356V383M650.5 382V417M651.5 416V451M652.5 450V478M653.5 477V493M654.5 486V494M655.5 465V487M656.5 433V466M657.5 393V434M658.5 349V394M659.5 305V350M660.5 265V306M661.5 233V266M662.5 212V234M663.5 205V213M664.5 207V226M665.5 225V259M666.5 258V301M667.5 300V344M668.5 343V379M669.5 378V401M670.5 400V406M671.5 382V402M672.5 357V383M673.5 342V358M674.5 340V348M675.5 347V368M676.5 367V398M677.5 397V432M678.5 431V463M679.5 462V486M680.5 485V496M681.5 483V496M682.5 458V484M683.5 422V459M684.5 378V423M685.5 331V379M686.5 285V332M687.5 247V286M688.5 218V248M689.5 203V219M690.5 201V211M691.5 210V237M692.5 236V276M693.5 275V320M694.5 319V361M695.5 360V391M696.5 390V404M697.5 394V404M698.5 373V395M699.5 352V374M700.5 341V353M701.5 341V352M702.5 351V378M703.5 377V414M704.5 413V451M705.5 450V481M706.5 480V497M707.5 490V499M708.5 469V491M709.5 437V470M710.5 396V438M711.5 351V397M712.5 305V352M713.5 263V306M714.5 229V264M715.5 206V230M716.5 197V207M717.5 197V214M718.5 213V244M719.5 243V286M720.5 285V330M721.5 329V368M722.5 367V394M723.5 393V402M724.5 386V401M725.5 363V387M726.5 345V364M727.5 342V346M728.5 345V364M729.5 363V392M730.5 391V426M731.5 425V459M732.5 458V486M733.5 485V500M734.5 492V501M735.5 470V493M736.5 436V471M737.5 393V437M738.5 346V394M739.5 299V347M740.5 256V300M741.5 222V257M742.5 200V223M743.5 192V201M744.5 194V211M745.5 210V241M746.5 240V281M747.5 280V323M748.5 322V361M749.5 360V388M750.5 387V400M751.5 386V400M752.5 361V387M753.5 344V362M754.5 342V350M755.5 349V371M756.5 370V402M757.5 401V437M758.5 436V469M759.5 468V493M760.5 492V504M761.5 491V504M762.5 468V492M763.5 433V469M764.5 391V434M765.5 345V392M766.5 299V346M767.5 257V300M768.5 222V258M769.5 198V223M770.5 187V199M771.5 187V201M772.5 200V231M773.5 230V271M774.5 270V315M775.5 314V356M776.5 355V385M777.5 384V398M778.5 385V398M779.5 361V386M780.5 345V362M781.5 343V351M782.5 350V372M783.5 371V403M784.5 402V439M785.5 438V471M786.5 470V496M787.5 495V506M788.5 494V506M789.5 471V495M790.5 437V472M791.5 396V438M792.5 350V397M793.5 303V351M794.5 260V304M795.5 224V261M796.5 198V225M797.5 184V199M798.5 182V192M799.5 191V220M800.5 219V261M801.5 260V307M802.5 306V351M803.5 350V382M804.5 381V397M805.5 385V397M806.5 364V386M807.5 347V365M808.5 344V349M809.5 348V367M810.5 366V396M811.5 395V432M812.5 431V466M813.5 465V493M814.5 492V508M815.5 501V509M816.5 481V502M817.5 450V482M818.5 411V451M819.5 366V412M820.5 319V367M821.5 274V320M822.5 234V275M823.5 203V235M824.5 183V204M825.5 176V184M826.5 178V197M827.5 196V231M828.5 230V274M829.5 273V320M830.5 319V359M831.5 358V386M832.5 385V395M833.5 375V393M834.5 353V376M835.5 345V354M836.5 346V361M837.5 360V387M838.5 386V420M839.5 419V455M840.5 454V485M841.5 484V506M842.5 505V512M843.5 496V511M844.5 472V497M845.5 438V473M846.5 397V439M847.5 352V398M848.5 306V353M849.5 262V307M850.5 224V263M851.5 195V225M852.5 176V196M853.5 169V177M854.5 171V192M855.5 191V228M856.5 227V275M857.5 274V323M858.5 322V363M859.5 362V387M860.5 386V392M861.5 371V389M862.5 353V372M863.5 346V354M864.5 347V363M865.5 362V389M866.5 388V422M867.5 421V458M868.5 457V488M869.5 487V509M870.5 508V516M871.5 499V514M872.5 474V500M873.5 439V475M874.5 396V440M875.5 350V397M876.5 302V351M877.5 257V303M878.5 218V258M879.5 188V219M880.5 168V189M881.5 161V169M882.5 163V183M883.5 182V218M884.5 217V264M885.5 263V312M886.5 311V353M887.5 352V381M888.5 380V390M889.5 373V389M890.5 354V374M891.5 347V355M892.5 348V364M893.5 363V390M894.5 389V425M895.5 424V460M896.5 459V492M897.5 491V512M898.5 511V519M899.5 504V518M900.5 480V505M901.5 448V481M902.5 408V449M903.5 364V409M904.5 318V365M905.5 273V319M906.5 231V274M907.5 197V232M908.5 171V198M909.5 155V172M910.5 152V158M911.5 157V186M912.5 185V231M913.5 230V284M914.5 283V334M915.5 333V371M916.5 370V388M917.5 378V388M918.5 361V379M919.5 349V362M920.5 348V357M921.5 356V379M922.5 378V413M923.5 412V451M924.5 450V486M925.5 485V512M926.5 511V523M927.5 513V523M928.5 494V514M929.5 466V495M930.5 431V467M931.5 391V432M932.5 347V392M933.5 302V348M934.5 259V303M935.5 220V260M936.5 187V221M937.5 161V188M938.5 144V162M939.5 138V145M940.5 140V162M941.5 161V200M942.5 199V250M943.5 249V301M944.5 300V346M945.5 345V376M946.5 375V386M947.5 370V385M948.5 354V371M949.5 350V355M950.5 354V372M951.5 371V400M952.5 399V435M953.5 434V471M954.5 470V501M955.5 500V521M956.5 520V528M957.5 514V527M958.5 493V515M959.5 463V494M960.5 427V464M961.5 385V428M962.5 341V386M963.5 295V342M964.5 251V296M965.5 211V252M966.5 176V212M967.5 148V177M968.5 129V149M969.5 120V130M970.5 120V138M971.5 137V174M972.5 173V225M973.5 224V280M974.5 279V331M975.5 330V368M976.5 367V384M977.5 372V384M978.5 356V373M979.5 352V357M980.5 356V375M981.5 374V404M982.5 403V440M983.5 439V476M984.5 475V508M985.5 507V528M986.5 527V535M987.5 527V535M988.5 512V528M989.5 483V513M990.5 448V484M991.5 405V449M992.5 362V406M993.5 320V363M994.5 278V321M995.5 239V279M996.5 206V240M997.5 178V207M998.5 156V179M999.5 139V157M1000.5 124V140M1001.5 112V125M1002.5 103V113M1003.5 97V104M1004.5 95V98M1005.5 95V99M1006.5 98V104M1007.5 103V109M1008.5 108V114M1009.5 113V118M1010.5 117V121M1011.5 120V125M1012.5 124V128M1013.5 127V131M1014.5 130V134M1015.5 133V136M1016.5 135V138M1017.5 137V139M1018.5 138V140M1019.5 139V141M1020.5 140V142M1021.5 141V143M1022.5 142V144M1023.5 143V145M1024.5 144V147M1025.5 146V148M1026.5 147V149M1027.5 148V151M1028.5 150V153M1029.5 152V154M1030.5 153V156M1031.5 155V157M1032.5 156V159M1033.5 158V161M1034.5 160V163M1035.5 162V165M1036.5 164V167M1037.5 166V170M1038.5 169V172M1039.5 171V174M1040.5 173V176M1041.5 175V179M1042.5 178V180M1043.5 179V182M1044.5 181V184M1045.5 183V186M1046.5 185V188M1047.5 187V189M1048.5 188V191M1049.5 190V193M1050.5 192V195M1051.5 194V196M1052.5 195V198M1053.5 197V200M1054.5 199V202M1055.5 201V204M1056.5 203V206M1057.5 205V208M1058.5 207V209M1059.5 208V211M1060.5 210V213M1061.5 212V215M1062.5 214V217M1063.5 216V219M1064.5 218V221M1065.5 220V222M1066.5 221V224M1067.5 223V226M1068.5 225V227M1069.5 226V229M1070.5 228V231M1071.5 230V233M1072.5 232V234M1073.5 233V236M1074.5 235V238M1075.5 237V239M1076.5 238V241M1077.5 240V243M1078.5 242V244M1079.5 243V246M1080.5 245V248M1081.5 247V249M1082.5 248V251M1083.5 250V253M1084.5 252V254M1085.5 253V256M1086.5 255V258M1087.5 257V259M1088.5 258V261M1089.5 260V262M1090.5 261V264M1091.5 263V266M1092.5 265V267M1093.5 266V269M1094.5 268V270M1095.5 269V272M1096.5 271V273M1097.5 272V274M1098.5 273V276M1099.5 275V277M1100.5 276V279M1101.5 278V280M1102.5 279V281M1103.5 280V283M1104.5 282V284M1105.5 283V286M1106.5 285V287M1107.5 286V288M1108.5 287V290M1109.5 289V291M1110.5 290V292M1111.5 291V294M1112.5 293V295M1113.5 294V296M1114.5 295V297M1115.5 296V299M1116.5 298V300M1117.5 299V301M1118.5 300V302M1119.5 301V304M1120.5 303V305M1121.5 304V306M1122.5 305V307M1123.5 306V308M1124.5 307V309M1125.5 308V311M1126.5 310V312M1127.5 311V313M1128.5 312V314M1129.5 313V315M1130.5 314V316M1131.5 315V317M1132.5 316V318M1133.5 317V319M1134.5 318V320M1135.5 319V321M1136.5 320V322M1137.5 321V323M1138.5 322V324M1139.5 323V325M1140.5 324V326M1141.5 325V327M1142.5 326V328M1143.5 327V329M1144.5 328V330M1145.5 329V331M1146.5 330V332M1147.5 331V333M1148.5 332V334M1149.5 333V335M1150.5 334V336M1151.5 335V337M1152.5 336V337M1153.5 336V338M1154.5 337V339M1155.5 338V340M1156.5 339V341M1157.5 340V342M1158.5 341V343M1159.5 342V343M1160.5 342V344M1161.5 343V345M1162.5 344V346M1163.5 345V347M1164.5 346V347M1165.5 346V348M1166.5 347V349M1167.5 348V350M1168.5 349V350M1169.5 349V351M1170.5 350V352M1171.5 351V352M1172.5 351V353M1173.5 352V354M1174.5 353V355M1175.5 354V355M1176.5 354V356M1177.5 355V357M1178.5 356V357M1179.5 356V358M1180.5 357V359M1181.5 358V359M1182.5 358V360M1183.5 359V361M1184.5 360V361M1185.5 360V362M1186.5 361V363M1187.5 362V364M1188.5 363V364M1189.5 363V365M1190.5 364V366M1191.5 365V366M1192.5 365V367M1193.5 366V368M1194.5 367V368M1195.5 367V369M1196.5 368V370M1197.5 369V370M1198.5 369V371M1199.5 370V371M1200.5 370V372M1201.5 371V373M1202.5 372V373M1203.5 372V374M1204.5 373V375M1205.5 374V375M1206.5 374V376M1207.5 375V376M1208.5 375V377M1209.5 376V378M1210.5 377V378M1211.5 377V379M1212.5 378V379M1213.5 378V380M1214.5 379V381M1215.5 380V381M1216.5 380V382M1217.5 381V382M1218.5 381V383M1219.5 382V383M1220.5 382V384M1221.5 383V384M1222.5 383V385M1223.5 384V386M1224.5 385V386M1225.5 385V387M1226.5 386V387M1227.5 386V388M1228.5 387V388M1229.5 387V389M1230.5 388V389M1231.5 388V390M1232.5 389V390M1233.5 389V391M1234.5 390V391M1235.5 390V392M1236.5 391V392M1237.5 391V393M1238.5 392V393M1239.5 392V394M1240.5 393V394M1241.5 393V395M1242.5 394V395M1243.5 394V396M1244.5 395V396M1245.5 395V397M1246.5 396V397M1247.5 396V398M1248.5 397V398M1249.5 397V398M1250.5 397V399M1251.5 398V399M1252.5 398V400M1253.5 399V400M1254.5 399V400M1255.5 399V401M1256.5 400V401M1257.5 400V402M1258.5 401V402M1259.5 401V402M1260.5 401V403M1261.5 402V403M1262.5 402V404M1263.5 403V404M1264.5 403V404M1265.5 403V405M1266.5 404V405M1267.5 404V405M1268.5 404V406M1269.5 405V406M1270.5 405V406M1271.5 405V407M1272.5 406V407M1273.5 406V407M1274.5 406V408M1275.5 407V408M1276.5 407V408M1277.5 407V409M1278.5 408V409M1279.5 408V409M1280.5 408V409M1281.5 408V410M1282.5 409V410M1283.5 409V410M1284.5 409V411M1285.5 410V411M1286.5 410V411M1287.5 410V412M1288.5 411V412M1289.5 411V412M1290.5 411V412M1291.5 411V413M1292.5 412V413M1293.5 412V413M1294.5 412V414M1295.5 413V414M1296.5 413V414M1297.5 413V414M1298.5 413V415M1299.5 414V415M1300.5 414V415M1301.5 414V416M1302.5 415V416M1303.5 415V416M1304.5 415V417M1305.5 416V417M1306.5 416V417M1307.5 416V417M1308.5 416V418M1309.5 417V418M1310.5 417V418M1311.5 417V419M1312.5 418V419M1313.5 418V419M1314.5 418V419M1315.5 418V420M1316.5 419V420M1317.5 419V420M1318.5 419V420M1319.5 419V421M1320.5 420V421M1321.5 420V421M1322.5 420V421M1323.5 420V422M1324.5 421V422M1325.5 421V422M1326.5 421V422M1327.5 421V423M1328.5 422V423M1329.5 422V423M1330.5 422V423M1331.5 422V424M1332.5 423V424M1333.5 423V424M1334.5 423V424M1335.5 423V424M1336.5 423V425M1337.5 424V425M1338.5 424V425M1339.5 424V425M1340.5 424V425M1341.5 424V426M1342.5 425V426M1343.5 425V426M1344.5 425V426M1345.5 425V426M1346.5 425V427M1347.5 426V427M1348.5 426V427M1349.5 426V427M1350.5 426V427M1351.5 426V427M1352.5 426V428M1353.5 427V428M1354.5 427V428M1355.5 427V428M1356.5 427V428M1357.5 427V428M1358.5 427V429M1359.5 428V429M1360.5 428V429M1361.5 428V429M1362.5 428V429M1363.5 428V429M1364.5 428V430M1365.5 429V430M1366.5 429V430M1367.5 429V430M1368.5 429V430M1369.5 429V430M1370.5 429V431M1371.5 430V431M1372.5 430V431M1373.5 430V431M1374.5 430V431M1375.5 430V431M1376.5 430V431M1377.5 430V432M1378.5 431V432M1379.5 431V432M1380.5 431V432M1381.5 431V432M1382.5 431V432M1383.5 431V432M1384.5 431V433M1385.5 432V433M1386.5 432V433M1387.5 432V433M1388.5 432V433M1389.5 432V433M1390.5 432V433M1391.5 432V433M1392.5 432V434M1393.5 433V434M1394.5 433V434M1395.5 433V434M1396.5 433V434M1397.5 433V434M1398.5 433V434M1399.5 433V434M1400.5 433V435M1401.5 434V435M1402.5 434V435M1403.5 434V435M1404.5 434V435M1405.5 434V435M1406.5 434V435M1407.5 434V435M1408.5 434V435M1409.5 434V436M1410.5 435V436M1411.5 435V436M1412.5 435V436M1413.5 435V436M1414.5 435V436M1415.5 435V436M1416.5 435V436M1417.5 435V436M1418.5 435V437M1419.5 436V437M1420.5 436V437M1421.5 436V437M1422.5 436V437M1423.5 436V437M1424.5 436V437M1425.5 436V437M1426.5 436V437M1427.5 436V437M1428.5 436V438M1429.5 437V438M1430.5 437V438M1431.5 437V438M1432.5 437V438M1433.5 437V438M1434.5 437V438M1435.5 437V438M1436.5 437V438M1437.5 437V438M1438.5 437V438M1439.5 437V439M1440.5 438V439M1441.5 438V439M1442.5 438V439M1443.5 438V439M1444.5 438V439M1445.5 438V439M1446.5 438V439M1447.5 438V439M1448.5 438V439M1449.5 438V439M1450.5 438V440M1451.5 439V440M1452.5 439V440M1453.5 439V440M1454.5 439V440M1455.5 439V440M1456.5 439V440M1457.5 439V440M1458.5 439V440M1459.5 439V440M1460.5 439V440M1461.5 439V441M1462.5 440V441M1463.5 440V441M1464.5 440V441M1465.5 440V441M1466.5 440V441M1467.5 440V441M1468.5 440V441M1469.5 440V441M1470.5 440V441M1471.5 440V441" stroke="#f00" stroke-width="1" fill="none"/>
<path d="M507.5 224V254" stroke="#ff9c10" stroke-width="1"/>
<path d="M507.5 254V294" stroke="#00d000" stroke-width="1"/>
<circle cx="392.5" cy="439.5" r="3" fill="none" stroke="#00f0ff" stroke-width="1" shape-rendering="auto"/>
<circle cx="507.5" cy="431.5" r="3" fill="none" stroke="#f8d820" stroke-width="1" shape-rendering="auto"/>
<path d="M385.7 36H399.3L392.5 42.7Z" fill="#00f0ff" shape-rendering="auto"/>
<path d="M498.7 34H516.3L507.5 42.7Z" fill="#f8d820" shape-rendering="auto"/>
<text x="392.1" y="41" class="flag">1</text>
<text x="507.6" y="40" class="flag" style="font-size:8px">2</text>
</svg>
<svg class="abs" style="left:5px;top:866px" width="8" height="10" viewBox="0 0 8 10"><path d="M6.2 1.7L2.2 4.7L6.2 7.7" fill="none" stroke="#000" stroke-width="1.9"/></svg>
<svg class="abs" style="left:1471px;top:866px" width="8" height="10" viewBox="0 0 8 10"><path d="M1.8 1.7L5.8 4.7L1.8 7.7" fill="none" stroke="#000" stroke-width="1.9"/></svg>
<span class="t" style="left:6.40px;top:890px;letter-spacing:0.056px;">T1</span>
<span class="t" style="left:6.40px;top:904px;letter-spacing:0.056px;">T2</span>
<span class="t" style="left:6.40px;top:924px;letter-spacing:-0.186px;">T2-T1</span>
<svg class="abs" style="left:30px;top:891px" width="9" height="9" viewBox="0 0 9 9"><path d="M0 4.5L4.6 0V3.2H9V5.8H4.6V9Z" fill="#000"/></svg>
<svg class="abs" style="left:46px;top:891px" width="9" height="9" viewBox="0 0 9 9"><path d="M9 4.5L4.4 0V3.2H0V5.8H4.4V9Z" fill="#000"/></svg>
<svg class="abs" style="left:30px;top:908px" width="9" height="9" viewBox="0 0 9 9"><path d="M0 4.5L4.6 0V3.2H9V5.8H4.6V9Z" fill="#000"/></svg>
<svg class="abs" style="left:46px;top:908px" width="9" height="9" viewBox="0 0 9 9"><path d="M9 4.5L4.4 0V3.2H0V5.8H4.4V9Z" fill="#000"/></svg>
<div class="abs" style="left:62px;top:881px;width:1251px;height:1px;background:#000"></div>
<div class="abs" style="left:62px;top:881px;width:1px;height:58px;background:#000"></div>
<span class="t" style="left:86.00px;top:883px;letter-spacing:-0.382px;">Time</span>
<span class="t" style="left:150.50px;top:883px;letter-spacing:-0.180px;">Channel_A</span>
<span class="t" style="left:230.50px;top:883px;letter-spacing:-0.242px;">Channel_B</span>
<span class="t" style="left:74.70px;top:896px;letter-spacing:-0.015px;">7.205 us</span>
<span class="t" style="left:148.25px;top:896px;letter-spacing:-0.231px;">648.204 mV</span>
<span class="t" style="left:225.50px;top:896px;letter-spacing:-0.119px;">-666.073 uV</span>
<span class="t" style="left:74.70px;top:909px;letter-spacing:-0.015px;">8.781 us</span>
<span class="t" style="left:158.25px;top:909px;letter-spacing:-0.320px;">1.284 V</span>
<span class="t" style="left:233.25px;top:909px;letter-spacing:-0.156px;">6.550 mV</span>
<span class="t" style="left:74.70px;top:922px;letter-spacing:-0.015px;">1.575 us</span>
<span class="t" style="left:148.25px;top:922px;letter-spacing:-0.231px;">635.787 mV</span>
<span class="t" style="left:234.50px;top:922px;letter-spacing:-0.335px;">7.216 mV</span>
<span class="t" style="left:1330.50px;top:893px;letter-spacing:0.055px;">Reverse</span>
<span class="t" style="left:1338.70px;top:920px;letter-spacing:-0.059px;">Save</span>
<span class="t" style="left:1391.20px;top:930px;letter-spacing:0.156px;">Ext. trigger</span>
<span class="t" style="left:10.10px;top:948px;letter-spacing:-0.484px;">Timebase</span>
<span class="t" style="left:3.30px;top:966px;letter-spacing:-0.356px;">Scale:</span>
<span class="t" style="left:3.30px;top:985px;letter-spacing:-0.024px;">X pos.(Div):</span>
<div class="bx" style="left:157px;top:960px;width:183px;height:18px;border-color:#0078d7"></div>
<div class="abs" style="left:163px;top:963px;width:1px;height:13px;background:#000"></div>
<span class="t" style="left:163.50px;top:964px;letter-spacing:-0.264px;">2 us/Div</span>
<svg class="abs" style="left:347px;top:963px" width="7" height="14" viewBox="0 0 7 14" shape-rendering="crispEdges"><path d="M3 1h1v1h1v1h1v1h-5v-1h1v-1h1z M1 10h5v1h-1v1h-1v1h-1v-1h-1v-1h-1z" fill="#000"/></svg>
<div class="bx" style="left:182px;top:981px;width:175px;height:18px;border-color:#000"></div>
<span class="t" style="left:187.30px;top:985px;">0</span>
<div class="bx" style="left:9px;top:1005px;width:80px;height:15px;border-color:#0078d7"></div>
<span class="t" style="left:40.90px;top:1008px;letter-spacing:0.088px;">Y/T</span>
<span class="t" style="left:125.50px;top:1008px;letter-spacing:-0.289px;">Add</span>
<span class="t" style="left:214.70px;top:1008px;letter-spacing:0.333px;">B/A</span>
<span class="t" style="left:302.20px;top:1008px;letter-spacing:-0.217px;">A/B</span>
<span class="t" style="left:373.10px;top:948px;letter-spacing:-0.133px;">Channel A</span>
<span class="t" style="left:367.20px;top:966px;letter-spacing:-0.336px;">Scale:</span>
<span class="t" style="left:367.20px;top:985px;letter-spacing:-0.015px;">Y pos.(Div):</span>
<div class="bx" style="left:521px;top:960px;width:201px;height:18px;border-color:#000"></div>
<span class="t" style="left:527.80px;top:964px;letter-spacing:-0.368px;">10&nbsp; V/Div</span>
<div class="bx" style="left:547px;top:981px;width:175px;height:18px;border-color:#000"></div>
<span class="t" style="left:552.20px;top:985px;">0</span>
<span class="t" style="left:402.50px;top:1008px;letter-spacing:-0.981px;">AC</span>
<span class="t" style="left:491.50px;top:1008px;">0</span>
<div class="bx" style="left:539px;top:1005px;width:81px;height:15px;border-color:#0078d7"></div>
<span class="t" style="left:572.50px;top:1008px;letter-spacing:-1.891px;">DC</span>
<span class="t" style="left:735.50px;top:948px;letter-spacing:-0.397px;">Channel B</span>
<span class="t" style="left:729.30px;top:966px;letter-spacing:-0.336px;">Scale:</span>
<span class="t" style="left:729.30px;top:985px;letter-spacing:-0.033px;">Y pos.(Div):</span>
<div class="bx" style="left:884px;top:960px;width:201px;height:18px;border-color:#000"></div>
<span class="t" style="left:889.90px;top:964px;letter-spacing:-0.518px;">5 mV/Div</span>
<div class="bx" style="left:910px;top:981px;width:175px;height:18px;border-color:#000"></div>
<span class="t" style="left:915.20px;top:985px;">0</span>
<span class="t" style="left:759.10px;top:1010px;letter-spacing:-0.481px;">AC</span>
<span class="t" style="left:834.20px;top:1010px;">0</span>
<div class="bx" style="left:875px;top:1007px;width:69px;height:15px;border-color:#0078d7"></div>
<span class="t" style="left:902.10px;top:1010px;letter-spacing:-0.891px;">DC</span>
<span class="t" style="left:977.50px;top:1010px;">-</span>
<span class="t" style="left:1099.25px;top:948px;letter-spacing:-0.248px;">Trigger</span>
<span class="t" style="left:1093.10px;top:966px;letter-spacing:-0.137px;">Edge:</span>
<span class="t" style="left:1093.10px;top:985px;letter-spacing:-0.052px;">Level:</span>
<div class="bx" style="left:1139px;top:964px;width:60px;height:14px;border-color:#0078d7"></div>
<svg class="abs" style="left:1160px;top:962px" width="90" height="20" viewBox="1160 962 90 20"><g fill="none" stroke="#000" stroke-width="1"><path d="M1164 975.5H1169.5V968.5H1174" shape-rendering="crispEdges"/><path d="M1166.8 972.9L1169.6 970.1L1172.2 972.6"/><path d="M1229 967.5H1233.5V974.5H1238" shape-rendering="crispEdges"/><path d="M1231 970L1233.5 972.6L1236.2 969.9"/></g></svg>
<div class="bx" style="left:1271px;top:964px;width:62px;height:16px;border-color:#0078d7"></div>
<span class="t" style="left:1298.10px;top:967px;">A</span>
<div class="bx" style="left:1138px;top:984px;width:332px;height:18px;border-color:#000"></div>
<div class="abs" style="left:1444px;top:984px;width:2px;height:20px;background:#000"></div>
<span class="t" style="left:1143.30px;top:988px;">0</span>
<span class="t" style="left:1452.10px;top:987px;">V</span>
<span class="t" style="left:1128.00px;top:1008px;letter-spacing:-0.376px;">Single</span>
<span class="t" style="left:1224.90px;top:1008px;letter-spacing:-0.311px;">Normal</span>
<span class="t" style="left:1325.90px;top:1008px;letter-spacing:0.320px;">Auto</span>
<div class="bx" style="left:1385px;top:1005px;width:87px;height:15px;border-color:#0078d7"></div>
<span class="t" style="left:1416.30px;top:1008px;letter-spacing:-0.366px;">None</span>
</body>
</html>
